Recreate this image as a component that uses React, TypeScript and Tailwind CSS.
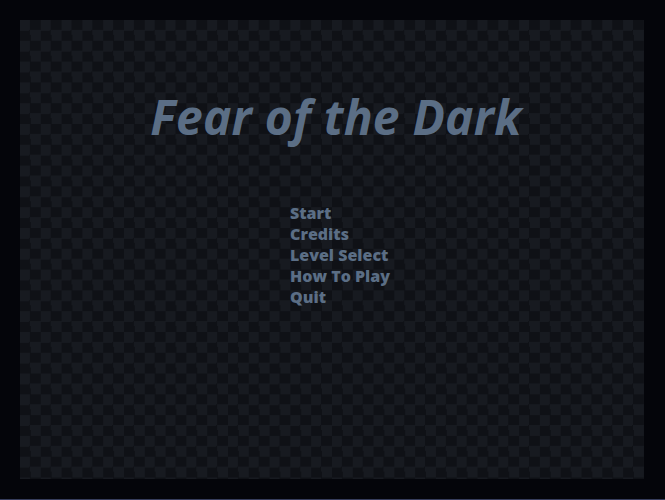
const MENU = ['Start', 'Credits', 'Level Select', 'How To Play', 'Quit'];

export default function App() {
    return (
        <div className="w-[665px] h-[500px] bg-[#04050a] flex flex-col font-['Open_Sans',sans-serif]">
            <div className="flex-1 pt-[20px] pl-[20px] pr-[21px] pb-[20px]">
                <div className="h-full flex flex-col bg-[#0f1116] bg-[repeating-conic-gradient(#0f1116_0_25%,#171a20_0_50%)] bg-size-[20.8px_20.8px]">
                    <h1 className="mt-[67px] pl-[8px] text-center text-[48px] leading-[60px] font-bold italic text-[#5b6e85] tracking-[0.2px]">
                        Fear of the Dark
                    </h1>
                    <nav className="mt-[56px] pl-[270px] flex flex-col">
                        {MENU.map(item => (
                            <span key={item} className="text-[16px] leading-[21px] font-extrabold text-[#5b6e85]">
                                {item}
                            </span>
                        ))}
                    </nav>
                </div>
            </div>
            <div className="h-px bg-[#363d5c]" />
        </div>
    );
}
